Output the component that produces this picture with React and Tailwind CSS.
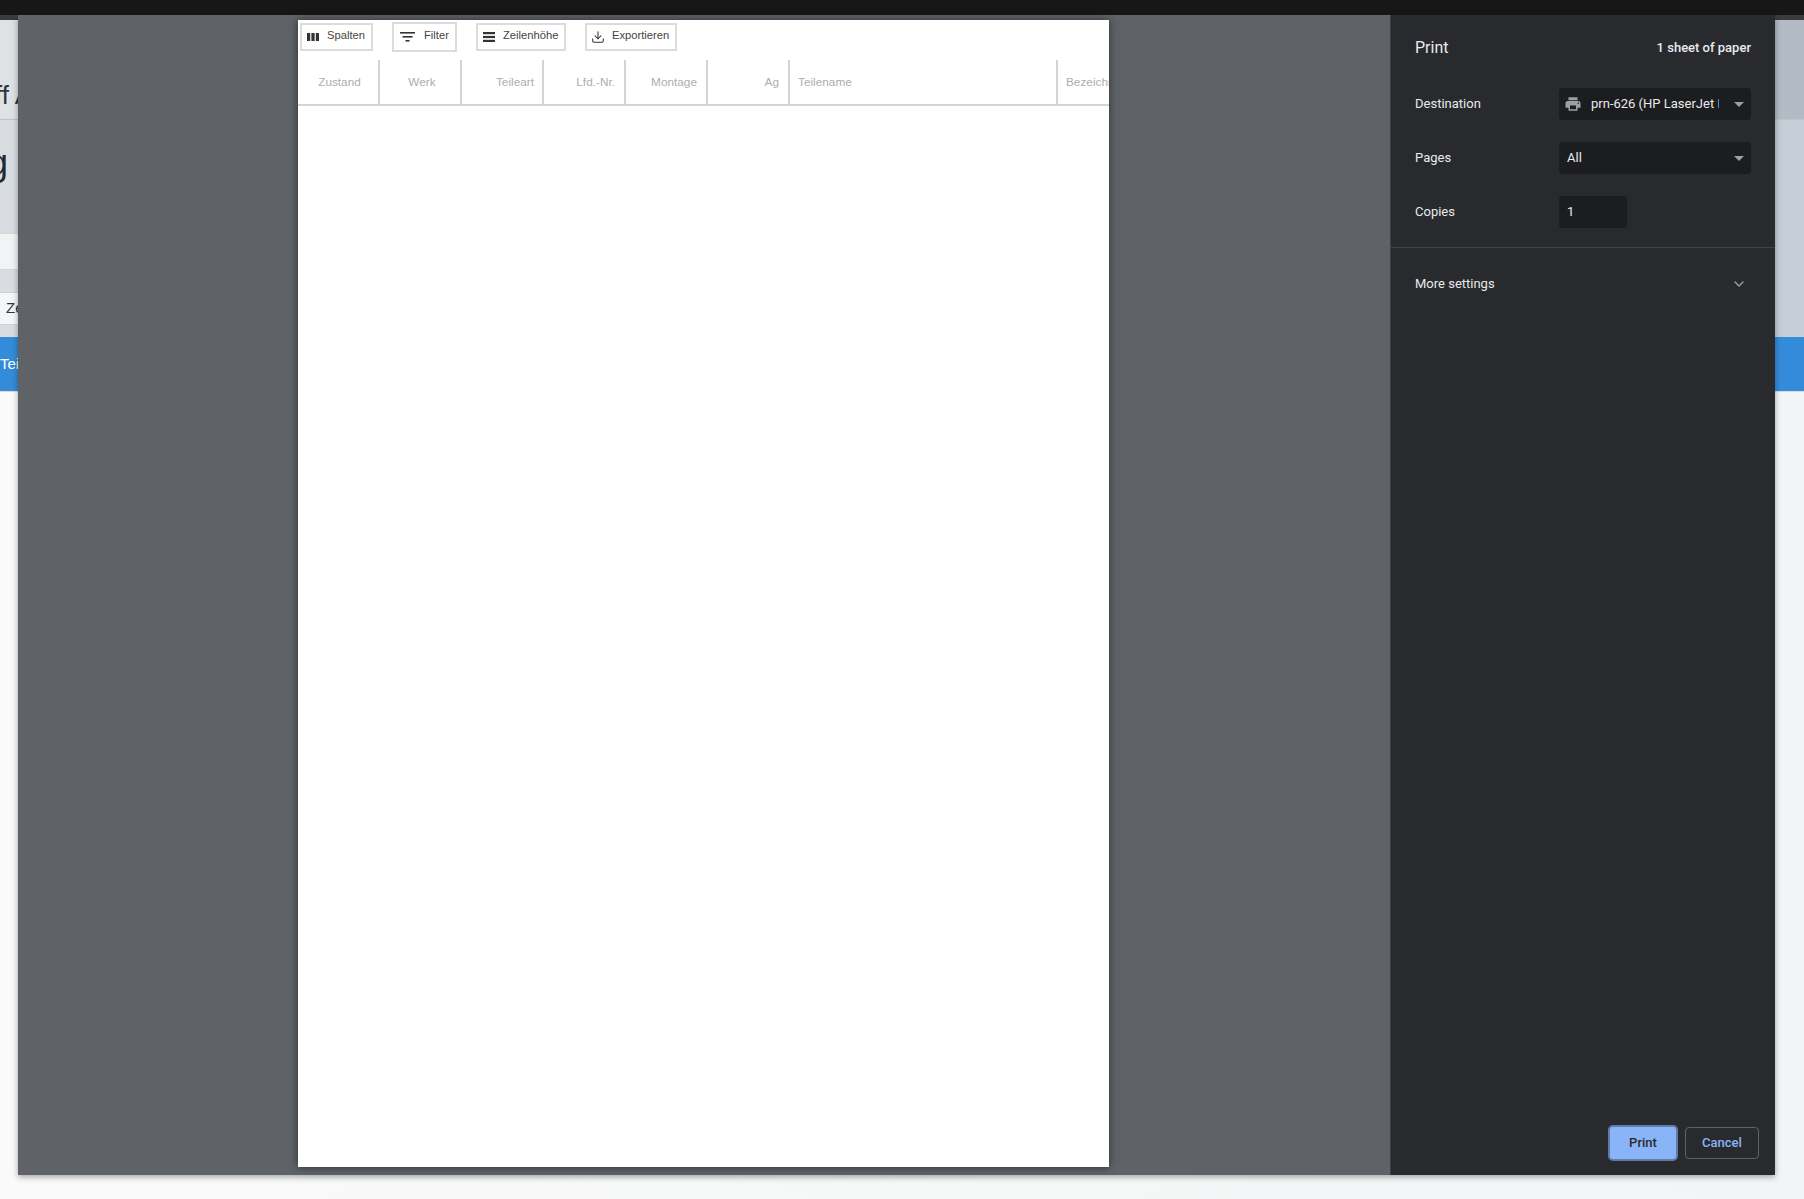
import React from 'react';
import { ChevronDown, Download } from 'lucide-react';

const COLUMNS = [
  { label: 'Zustand', width: 82, className: 'justify-center pl-[3px]' },
  { label: 'Werk', width: 82, className: 'justify-center pl-[4px]' },
  { label: 'Teileart', width: 82, className: 'justify-end pr-[8px]' },
  { label: 'Lfd.-Nr.', width: 82, className: 'justify-end pr-[9px]' },
  { label: 'Montage', width: 82, className: 'justify-end pr-[9px]' },
  { label: 'Ag', width: 82, className: 'justify-end pr-[9px]' },
  { label: 'Teilename', width: 268, className: 'justify-start pl-[8px]' },
  { label: 'Bezeichnung', width: 51, className: 'justify-start pl-[8px]', last: true },
];

function ToolButton({ children, label, className }) {
  return (
    <button className={`flex items-center border-2 border-[#dcdcdc] bg-white text-[#444] text-[11.2px] ${className}`}>
      {children}
      <span className="relative -top-[2px]">{label}</span>
    </button>
  );
}

function ColumnsIcon() {
  return (
    <svg width="12" height="8" viewBox="0 0 12 8" fill="#333">
      <rect x="0" y="0" width="3.2" height="8" />
      <rect x="4.4" y="0" width="3.2" height="8" />
      <rect x="8.8" y="0" width="3.2" height="8" />
    </svg>
  );
}

function FilterIcon() {
  return (
    <svg width="15" height="10" viewBox="0 0 15 10" fill="#333">
      <rect x="0" y="0" width="15" height="1.6" />
      <rect x="2.5" y="4" width="10" height="1.6" />
      <rect x="5.5" y="8" width="4" height="1.6" />
    </svg>
  );
}

function RowsIcon() {
  return (
    <svg width="12" height="10" viewBox="0 0 12 10" fill="#333">
      <rect x="0" y="0" width="12" height="2.2" />
      <rect x="0" y="3.9" width="12" height="2.2" />
      <rect x="0" y="7.8" width="12" height="2.2" />
    </svg>
  );
}

function PrinterIcon() {
  return (
    <svg width="18" height="18" viewBox="0 0 24 24" fill="#9aa0a6">
      <path d="M19 8H5c-1.66 0-3 1.34-3 3v6h4v4h12v-4h4v-6c0-1.66-1.34-3-3-3zm-3 11H8v-5h8v5zm3-7c-.55 0-1-.45-1-1s.45-1 1-1 1 .45 1 1-.45 1-1 1zm-1-9H6v4h12V3z" />
    </svg>
  );
}

function Caret() {
  return <div className="w-0 h-0 border-x-[5px] border-x-transparent border-t-[5px] border-t-[#9aa0a6]" />;
}

function Paper() {
  return (
    <div className="w-[811px] h-[1147px] mt-[5px] ml-[280px] bg-white shadow-[0_0_8px_rgba(0,0,0,0.55)] overflow-hidden font-['Liberation_Sans',sans-serif]">
      <div className="flex items-start h-[40px] pt-[2px] pl-[2px]">
        <ToolButton label="Spalten" className="w-[73px] h-[28px] mt-[1px] pl-[5px] gap-[8px]">
          <ColumnsIcon />
        </ToolButton>
        <ToolButton label="Filter" className="w-[65px] h-[30px] ml-[19px] pl-[6px] gap-[9px]">
          <FilterIcon />
        </ToolButton>
        <ToolButton label="Zeilenhöhe" className="w-[90px] h-[28px] mt-[1px] ml-[19px] pl-[5px] gap-[8px]">
          <RowsIcon />
        </ToolButton>
        <ToolButton label="Exportieren" className="w-[92px] h-[28px] mt-[1px] ml-[19px] pl-[4px] gap-[7px]">
          <Download size={14} strokeWidth={1.8} color="#333" />
        </ToolButton>
      </div>
      <div className="flex h-[46px] border-b-2 border-[#d4d4d4]">
        {COLUMNS.map((col) => (
          <div
            key={col.label}
            style={{ width: col.width }}
            className={`flex shrink-0 items-center overflow-hidden whitespace-nowrap pt-[2px] text-[11.8px] text-[#adadad] ${col.last ? '' : 'border-r-2 border-[#d4d4d4]'} ${col.className}`}
          >
            {col.label}
          </div>
        ))}
      </div>
    </div>
  );
}

function SettingRow({ label, children }) {
  return (
    <div className="flex items-center h-[32px] mb-[22px]">
      <span className="w-[144px] text-[13px] text-[#e8eaed]">{label}</span>
      {children}
    </div>
  );
}

function PrintPanel() {
  return (
    <div className="w-[385px] shrink-0 flex flex-col bg-[#292a2d] text-[#e8eaed] border-l border-[#3c3f43]">
      <div className="flex items-center justify-between h-[32px] mt-[17px] px-[24px]">
        <span className="text-[16px]">Print</span>
        <span className="text-[13px] font-medium">1 sheet of paper</span>
      </div>
      <div className="mt-[24px] px-[24px]">
        <SettingRow label="Destination">
          <div className="flex items-center w-[192px] h-[32px] bg-[#1c1d1f] rounded-[4px] pl-[5px] pr-[7px]">
            <PrinterIcon />
            <span className="ml-[9px] w-[128px] overflow-hidden whitespace-nowrap text-[13px]">prn-626 (HP LaserJet Pro MFP</span>
            <span className="ml-auto"><Caret /></span>
          </div>
        </SettingRow>
        <SettingRow label="Pages">
          <div className="flex items-center justify-between w-[192px] h-[32px] bg-[#1c1d1f] rounded-[4px] pl-[8px] pr-[7px] text-[13px]">
            All
            <Caret />
          </div>
        </SettingRow>
        <SettingRow label="Copies">
          <div className="flex items-center w-[68px] h-[32px] bg-[#1c1d1f] rounded-[4px] pl-[8px] text-[13px]">1</div>
        </SettingRow>
      </div>
      <div className="border-t border-[#3f4145] -mt-[3px]" />
      <div className="flex items-center justify-between h-[35px] mt-[18px] pl-[24px] pr-[28px] text-[13px]">
        More settings
        <ChevronDown size={16} color="#9aa0a6" />
      </div>
      <div className="mt-auto mb-[14px] mr-[16px] flex items-center justify-end gap-[7px] text-[13px] font-medium">
        <button className="w-[70px] h-[36px] rounded-[5px] bg-[#8ab4f8] border-2 border-[#5f7ba8] text-[#292a2d]">Print</button>
        <button className="w-[74px] h-[32px] rounded-[4px] border border-[#5f6368] text-[#8ab4f8]">Cancel</button>
      </div>
    </div>
  );
}

export default function App() {
  return (
    <div className="relative w-[1804px] h-[1199px] overflow-hidden bg-gradient-to-r from-[#fafafa] to-[#f2f4f5] font-['Roboto',_'Liberation_Sans',sans-serif]">
      <div className="h-[15px] bg-[#171717]" />
      <div className="h-[5px] bg-[#3a3b3d]" />
      <div className="h-[100px] pt-[62px] bg-gradient-to-r from-[#dfe2e5] to-[#b2bac3] border-b border-[#c0c4c8] font-['Liberation_Sans',sans-serif] text-[26px] leading-none text-[#2b3440] overflow-hidden whitespace-nowrap">
        <span className="block -ml-[5px]">ff Auftrag</span>
      </div>
      <div className="flex flex-col h-[217px] bg-gradient-to-r from-[#d9dde1] to-[#c5ced6] font-['Liberation_Sans',sans-serif]">
        <div className="h-[113px] pt-[25px] text-[36px] leading-none text-[#1f2a36] overflow-hidden whitespace-nowrap">
          <span className="block -ml-[32px]">ng</span>
        </div>
        <div className="w-[1000px] h-[37px] bg-[#f2f3f5] border-y border-[#d4d6d8]" />
        <div className="h-[22px]" />
        <div className="flex items-center w-[1000px] h-[33px] bg-[#f5f6f7] border-y border-[#cfd2d5] text-[15px] text-[#2b3440] pl-[6px]">Zeilen</div>
      </div>
      <div className="flex items-center h-[55px] bg-[#348bd9] border-b border-[#d8dadc] font-['Liberation_Sans',sans-serif] text-[15px] text-white">Teile</div>

      <div className="absolute left-[18px] top-[15px] w-[1757px] h-[1160px] flex bg-[#5f6368] shadow-[0_2px_6px_rgba(0,0,0,0.35)]">
        <div className="flex-1 min-w-0">
          <Paper />
        </div>
        <PrintPanel />
      </div>
    </div>
  );
}
